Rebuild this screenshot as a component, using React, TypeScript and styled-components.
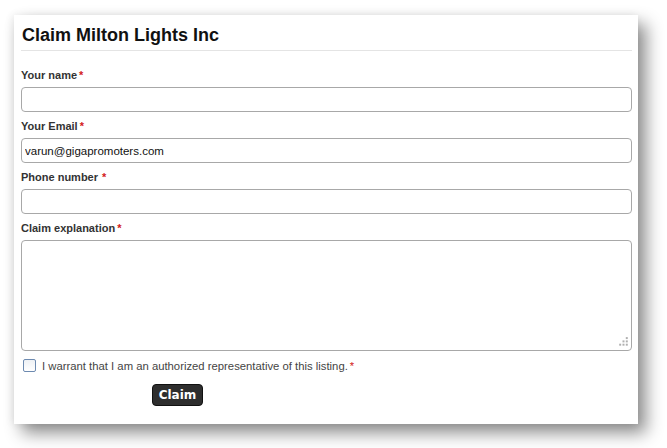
import React from "react";
import styled, { createGlobalStyle } from "styled-components";

const Global = createGlobalStyle`
  html, body { margin: 0; padding: 0; background: #fff; }
  body { font-family: "Liberation Sans", Arial, sans-serif; }
`;

const Page = styled.div`
  padding: 15px 0 0 14px;
  height: 448px;
  box-sizing: border-box;
`;

const Card = styled.div`
  width: 624px;
  height: 409px;
  background: #fff;
  box-shadow: 8px 9px 16px rgba(0, 0, 0, 0.45), -2px 0 8px rgba(0, 0, 0, 0.07);
  box-sizing: border-box;
  padding: 0 6px 0 7px;
  display: flex;
  flex-direction: column;
`;

const Title = styled.h1`
  margin: 0;
  padding: 10px 0 0 1px;
  font-size: 18px;
  font-weight: bold;
  color: #111;
  height: 36px;
  box-sizing: border-box;
  border-bottom: 1px solid #e4e4e4;
`;

const Form = styled.form`
  display: flex;
  flex-direction: column;
  padding-top: 17px;
`;

const Label = styled.label`
  font-size: 11px;
  font-weight: bold;
  color: #333;
  height: 14px;
  line-height: 14px;
  display: block;
  margin-bottom: 5px;
`;

const Req = styled.span<{ $gap?: number }>`
  color: #d32020;
  margin-left: ${(p) => p.$gap ?? 2}px;
`;

const Field = styled.div`
  display: flex;
  flex-direction: column;
  margin-bottom: 7px;
`;

const Input = styled.input`
  height: 25px;
  box-sizing: border-box;
  border: 1px solid #a8a8a8;
  border-radius: 4px;
  padding: 0 3px;
  font-family: "Liberation Sans", Arial, sans-serif;
  font-size: 11.5px;
  color: #111;
  outline: none;
`;

const AreaWrap = styled.div`
  position: relative;
  display: flex;
`;

const TextArea = styled.textarea`
  flex: 1;
  height: 111px;
  box-sizing: border-box;
  border: 1px solid #a8a8a8;
  border-radius: 4px;
  padding: 3px;
  font-family: "Liberation Sans", Arial, sans-serif;
  font-size: 12px;
  outline: none;
  resize: none;
`;

const Grip = styled.svg`
  position: absolute;
  right: 4px;
  bottom: 4px;
  width: 11px;
  height: 11px;
`;

const CheckRow = styled.label`
  display: flex;
  align-items: center;
  gap: 6px;
  margin-top: 1px;
  padding-left: 2px;
  font-size: 11.3px;
  color: #444;
`;

const Box = styled.span`
  width: 11px;
  height: 11px;
  border: 1px solid #6d8ab0;
  border-radius: 2px;
  background: linear-gradient(#eef1f5, #fff);
`;

const ButtonRow = styled.div`
  padding: 12px 0 0 131px;
`;

const Button = styled.button`
  width: 51px;
  height: 22px;
  background: #2e2e2e;
  color: #fff;
  border: 1px solid #111;
  border-radius: 4px;
  font-family: "DejaVu Sans", Verdana, sans-serif;
  font-weight: bold;
  font-size: 12px;
  padding: 0;
`;

const dots = [
  [8, 1],
  [5, 4],
  [8, 4],
  [2, 7],
  [5, 7],
  [8, 7],
];

export default function App() {
  return (
    <Page>
      <Global />
      <Card>
        <Title>Claim Milton Lights Inc</Title>
        <Form>
          <Field>
            <Label>Your name<Req>*</Req></Label>
            <Input />
          </Field>
          <Field>
            <Label>Your Email<Req>*</Req></Label>
            <Input defaultValue="varun@gigapromoters.com" />
          </Field>
          <Field>
            <Label>Phone number<Req $gap={4}>*</Req></Label>
            <Input />
          </Field>
          <Field>
            <Label>Claim explanation<Req>*</Req></Label>
            <AreaWrap>
              <TextArea />
              <Grip viewBox="0 0 10 10">
                {dots.map(([x, y]) => (
                  <rect key={`${x}-${y}`} x={x} y={y} width="1.8" height="1.8" fill="#b0b0b0" />
                ))}
              </Grip>
            </AreaWrap>
          </Field>
          <CheckRow>
            <Box />
            <span>I warrant that I am an authorized representative of this listing.<Req>*</Req></span>
          </CheckRow>
          <ButtonRow>
            <Button type="button">Claim</Button>
          </ButtonRow>
        </Form>
      </Card>
    </Page>
  );
}
